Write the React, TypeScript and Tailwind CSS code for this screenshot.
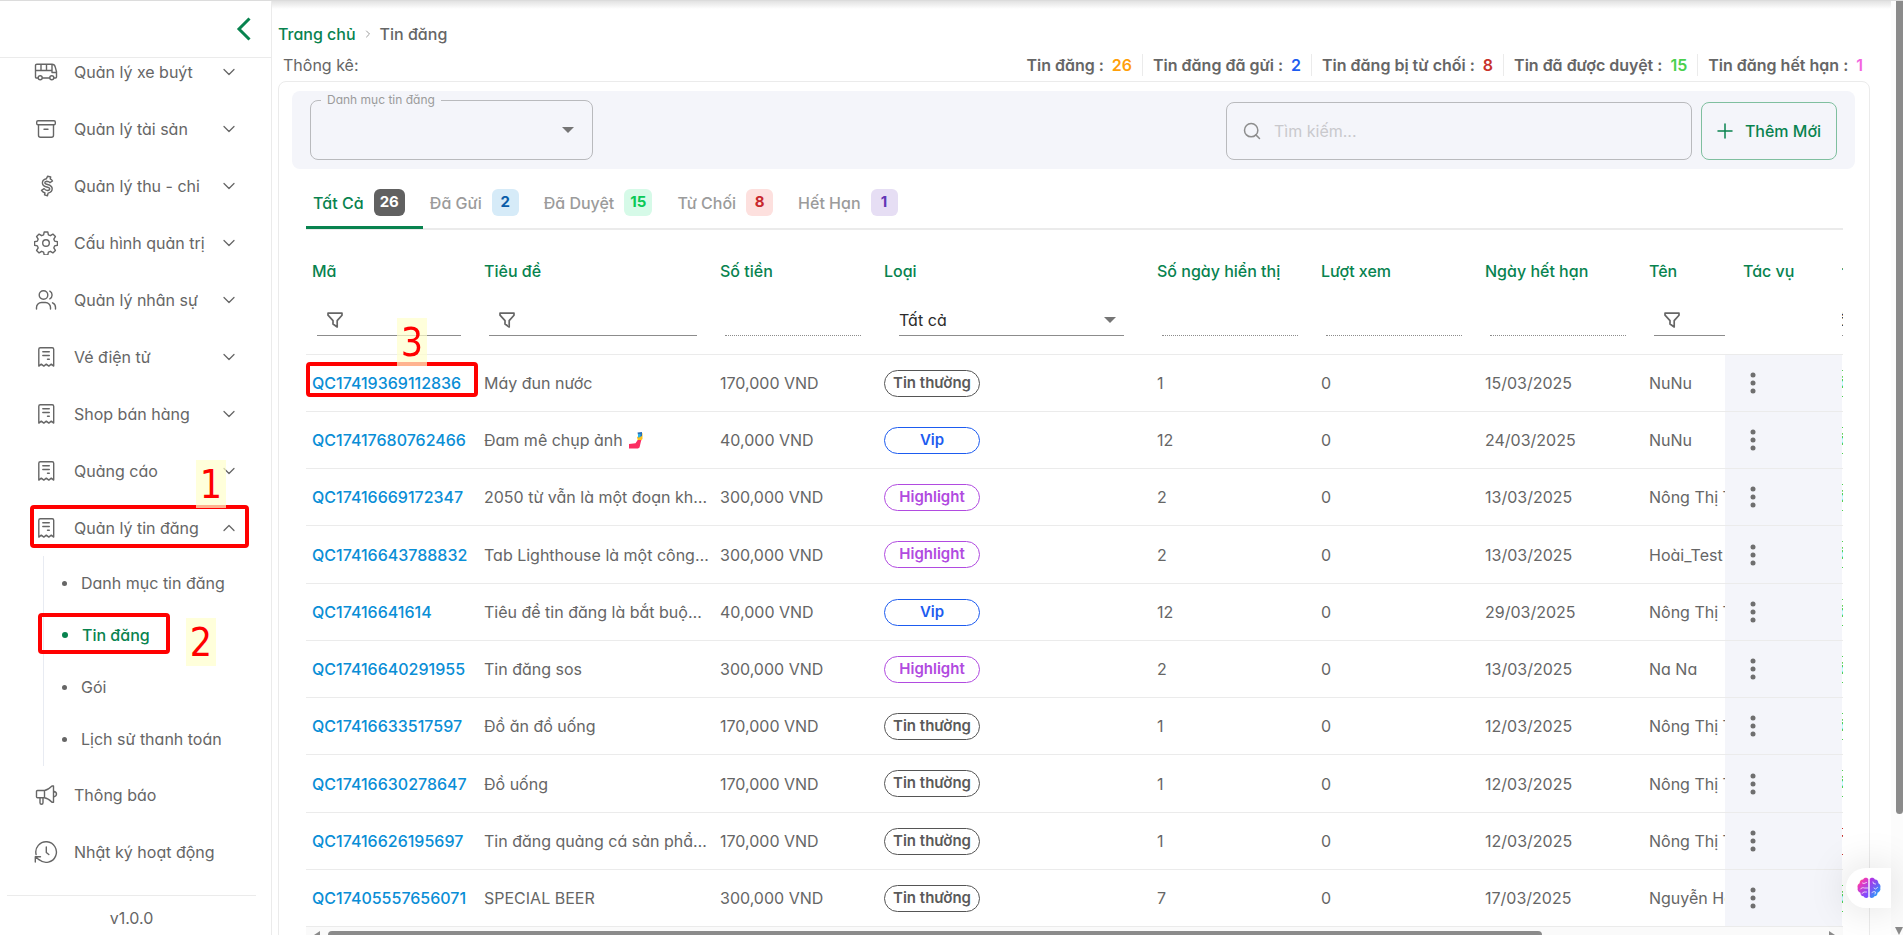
import { useState } from "react";
import { ChevronDown, ChevronUp, ChevronRight, Plus, Search } from "lucide-react";

type IconName = "bus" | "archive" | "dollar" | "gear" | "users" | "receipt" | "megaphone" | "history";

interface MenuItem {
  label: string;
  icon: IconName;
  leaf?: boolean;
  children?: string[];
}

const MENU: MenuItem[] = [
  { label: "Quản lý xe buýt", icon: "bus" },
  { label: "Quản lý tài sản", icon: "archive" },
  { label: "Quản lý thu - chi", icon: "dollar" },
  { label: "Cấu hình quản trị", icon: "gear" },
  { label: "Quản lý nhân sự", icon: "users" },
  { label: "Vé điện tử", icon: "receipt" },
  { label: "Shop bán hàng", icon: "receipt" },
  { label: "Quảng cáo", icon: "receipt" },
  {
    label: "Quản lý tin đăng",
    icon: "receipt",
    children: ["Danh mục tin đăng", "Tin đăng", "Gói", "Lịch sử thanh toán"],
  },
  { label: "Thông báo", icon: "megaphone", leaf: true },
  { label: "Nhật ký hoạt động", icon: "history", leaf: true },
];

const STATS = [
  { label: "Tin đăng :", value: 26, color: "text-[#ff9f0a]" },
  { label: "Tin đăng đã gửi :", value: 2, color: "text-[#1d5cf0]" },
  { label: "Tin đăng bị từ chối :", value: 8, color: "text-[#c8322b]" },
  { label: "Tin đã được duyệt :", value: 15, color: "text-[#4ad04e]" },
  { label: "Tin đăng hết hạn :", value: 1, color: "text-[#f364e0]" },
];

const TABS = [
  { label: "Tất Cả", count: 26, badge: "bg-[#616161] text-white" },
  { label: "Đã Gửi", count: 2, badge: "bg-[#d6ebf8] text-[#0a5ca8]" },
  { label: "Đã Duyệt", count: 15, badge: "bg-[#d6fae8] text-[#0ac956]" },
  { label: "Từ Chối", count: 8, badge: "bg-[#fde0de] text-[#c8282c]" },
  { label: "Hết Hạn", count: 1, badge: "bg-[#e6def4] text-[#6236b5]" },
];

type Kind = "Tin thường" | "Vip" | "Highlight";

const KIND_STYLE: Record<Kind, string> = {
  "Tin thường": "border-[#555] text-[#5a5a5a]",
  Vip: "border-[#1d5cf0] text-[#1d5cf0]",
  Highlight: "border-[#b14be0] text-[#b14be0]",
};

interface Post {
  code: string;
  title: string;
  selfie?: boolean;
  price: string;
  kind: Kind;
  days: number;
  expire: string;
  name: string;
  status: string;
}

const POSTS: Post[] = [
  { code: "QC17419369112836", title: "Máy đun nước", price: "170,000 VND", kind: "Tin thường", days: 1, expire: "15/03/2025", name: "NuNu", status: "Đã duyệt" },
  { code: "QC17417680762466", title: "Đam mê chụp ảnh", selfie: true, price: "40,000 VND", kind: "Vip", days: 12, expire: "24/03/2025", name: "NuNu", status: "Đã duyệt" },
  { code: "QC17416669172347", title: "2050 từ vẫn là một đoạn khá dài", price: "300,000 VND", kind: "Highlight", days: 2, expire: "13/03/2025", name: "Nông Thị Thu", status: "Đã duyệt" },
  { code: "QC17416643788832", title: "Tab Lighthouse là một công cụ", price: "300,000 VND", kind: "Highlight", days: 2, expire: "13/03/2025", name: "Hoài_Test", status: "Đã duyệt" },
  { code: "QC17416641614", title: "Tiêu đề tin đăng là bắt buộc nhập", price: "40,000 VND", kind: "Vip", days: 12, expire: "29/03/2025", name: "Nông Thị Thu", status: "Đã duyệt" },
  { code: "QC17416640291955", title: "Tin đăng sos", price: "300,000 VND", kind: "Highlight", days: 2, expire: "13/03/2025", name: "Na Na", status: "Đã duyệt" },
  { code: "QC17416633517597", title: "Đồ ăn đồ uống", price: "170,000 VND", kind: "Tin thường", days: 1, expire: "12/03/2025", name: "Nông Thị Thu", status: "Đã duyệt" },
  { code: "QC17416630278647", title: "Đồ uống", price: "170,000 VND", kind: "Tin thường", days: 1, expire: "12/03/2025", name: "Nông Thị Thu", status: "Đã duyệt" },
  { code: "QC17416626195697", title: "Tin đăng quảng cá sản phẩm mới", price: "170,000 VND", kind: "Tin thường", days: 1, expire: "12/03/2025", name: "Nông Thị Thu", status: "Từ chối" },
  { code: "QC17405557656071", title: "SPECIAL BEER", price: "300,000 VND", kind: "Tin thường", days: 7, expire: "17/03/2025", name: "Nguyễn Hoàng", status: "Đã duyệt" },
];

const MenuIcon = ({ name }: { name: IconName }) => (
  <svg
    viewBox="0 0 24 24"
    className="size-6 shrink-0"
    fill="none"
    stroke="currentColor"
    strokeWidth="1.4"
    strokeLinecap="round"
    strokeLinejoin="round"
  >
    {name === "bus" && (
      <>
        <path d="M4 18H2.500a1 1 0 0 1-1-1V5.500a1.300 1.300 0 0 1 1.300-1.300H18c1.800 0 2.800 1 3.200 2.600l1.300 5V17a1 1 0 0 1-1 1H20M8.500 18h7M1.500 10.500H18v2h4.500M7 4.200v6.300M12.500 4.200v6.300M18 4.200v6.300" />
        <circle cx="6.200" cy="17.700" r="2" />
        <circle cx="17.800" cy="17.700" r="2" />
      </>
    )}
    {name === "archive" && (
      <>
        <rect x="2.700" y="3.700" width="18.600" height="4" rx="1.300" />
        <path d="M4.500 7.700v10.600a2 2 0 0 0 2 2h11a2 2 0 0 0 2-2V7.700M10 12.200h4" />
      </>
    )}
    {name === "dollar" && (
      <path d="M13.700 2.200l3 .8-.5 1.900c1 .5 1.800 1.200 2.300 2.100l-2.600 1.700c-.7-1-1.800-1.500-3.100-1.500-1.300.1-2 .7-2 1.500 0 .9.800 1.300 2.800 1.800 2.800.7 4.600 2 4.600 4.300 0 2.100-1.500 3.800-4.100 4.300l-.6 2.600-3-.8.500-1.900c-1.600-.5-2.800-1.400-3.500-2.600l2.600-1.700c.9 1.200 2.100 1.800 3.500 1.800 1.400-.1 2.100-.8 2.100-1.700s-1-1.300-3-1.800c-2.600-.7-4.300-1.900-4.300-4.100 0-2 1.400-3.600 3.900-4.100z" />
    )}
    {name === "gear" && (
      <>
        <circle cx="12" cy="12" r="3.300" />
        <path d="M10.200 1h3.600l.6 2.900 2 .8 2.500-1.600 2.500 2.500-1.600 2.500.8 2 2.900.6v3.600l-2.900.6-.8 2 1.600 2.500-2.500 2.500-2.500-1.600-2 .8-.6 2.900h-3.600l-.6-2.900-2-.8-2.500 1.600-2.500-2.500 1.600-2.500-.8-2L.5 14.300v-3.600l2.900-.6.8-2-1.600-2.500 2.500-2.500 2.500 1.600 2-.8z" />
      </>
    )}
    {name === "users" && (
      <>
        <circle cx="9.500" cy="7" r="4.300" />
        <path d="M2.500 21v-1.500a5 5 0 0 1 5-5h4a5 5 0 0 1 5 5V21M15.800 3.200a4.300 4.300 0 0 1 0 7.600M18.500 14.800a4.800 4.800 0 0 1 3 4.500V21" />
      </>
    )}
    {name === "receipt" && (
      <path d="M4.800 4.200a1.500 1.500 0 0 1 1.500-1.500h11.900a1.500 1.500 0 0 1 1.500 1.500v16.900l-2.400-2-2.500 2-2.500-2-2.500 2-2.500-2-2.500 2zM8.800 6.700h6.500M8.800 10.500h6.500M13.500 14.300h1.800" />
    )}
    {name === "megaphone" && (
      <path d="M10.500 7.500h-7a1 1 0 0 0-1 1v5.200a1 1 0 0 0 1 1h7zM6 14.700v5a1.500 1.500 0 0 0 3 0v-5M10.500 14.700c3.500.5 5.500 2.500 7.500 4.500h1.500V3H18c-2 2-4 4-7.500 4.500M19.500 8.200c2.300.5 3 1.700 3 2.900s-.7 2.400-3 2.900" />
    )}
    {name === "history" && <path d="M5.300 19.800a10.300 10.300 0 1 0-3.200-5.300M1.300 22v-5.300H6.500M1.500 16.900 5.300 20M12.300 7v5.500l2.500 2" />}
  </svg>
);

const FilterIcon = () => (
  <svg viewBox="0 0 16 16" className="size-4" fill="none" stroke="currentColor" strokeWidth="1.700" strokeLinejoin="round">
    <path d="M1 1.200h14v2L10.200 8.600V15L6 12V8.600L1 3.200z" />
  </svg>
);

// Selfie arm drawn after the post title
const SelfieIcon = () => (
  <svg viewBox="0 0 14 17" className="ml-1.5 inline-block h-[17px] w-3.5 align-[-3px]">
    <path fill="#fbc11b" d="M8 5.500 10 3l3.500-2v6l-2 2H9z" />
    <path fill="#2b6fb8" d="M8.500.500 13 0v4l-3.500 1.500z" />
    <path fill="#29b3e6" d="M9 2h2.500v3L9 5.500z" />
    <path fill="#fb2d62" d="M8.700 8h3.600l-1.800 7.500L9 16.500H0V12l6.500-.7z" />
  </svg>
);

const BrainIcon = () => (
  <svg viewBox="0 0 24 24" className="size-6">
    <defs>
      <linearGradient id="brain-left" x1="0" y1="0" x2="0.600" y2="1">
        <stop offset="0" stopColor="#fb923c" />
        <stop offset="0.350" stopColor="#ec38bc" />
        <stop offset="1" stopColor="#7c4dff" />
      </linearGradient>
      <linearGradient id="brain-right" x1="0" y1="0" x2="0.600" y2="1">
        <stop offset="0" stopColor="#c02ae0" />
        <stop offset="0.550" stopColor="#6f5cf5" />
        <stop offset="1" stopColor="#22a7f9" />
      </linearGradient>
    </defs>
    <path fill="url(#brain-left)" d="M11.300 3v18c-1.200 1.300-3.800 1.300-4.700-.8-2 .1-3.400-1.500-3.100-3.400C1.200 16 .1 14 .7 12 0 10 1 8 2.600 7.300 2.600 5 4 3.300 6.100 3.500 7 1.300 10 1.300 11.300 3z" />
    <path fill="url(#brain-right)" d="M12.700 3v18c1.200 1.300 3.800 1.300 4.700-.8 2 .1 3.400-1.500 3.100-3.400 2.300-.8 3.400-2.800 2.800-4.800.7-2-.3-4-1.900-4.700 0-2.300-1.400-4-3.500-3.800-.9-2.200-3.900-2.200-5.200-.5z" />
    <path
      fill="none"
      stroke="#fff"
      strokeOpacity="0.800"
      strokeWidth="0.900"
      strokeLinecap="round"
      d="M9.500 6.500 7 7.500 5.500 7M3.500 13c1-1.500 2.500-1.500 4-1h3.500M5 17.500l2-1.500h2.500M16 6l.5 1.500L18.500 8M20.500 11.500l-2 1.500-1.500-1M15 16.500l2-1 1.500.5-.5 2"
    />
  </svg>
);

const Sidebar = () => (
  <aside className="flex w-[272px] shrink-0 flex-col border-r border-[#ebebeb]">
    <header className="flex h-[57px] shrink-0 items-center justify-end border-b border-[#ebebeb] pr-[15px]">
      <button type="button" aria-label="Thu gọn" className="text-[#08834f]">
        <svg viewBox="0 0 24 24" className="size-6" fill="none" stroke="currentColor" strokeWidth="3">
          <path d="M17.500 1.500 7 12l10.500 10.500" />
        </svg>
      </button>
    </header>
    <nav className="min-h-0 flex-1 overflow-hidden">
      <ul className="-mt-[15px]">
        {MENU.map((item) => (
          <li key={item.label}>
            <button type="button" className="flex h-[57px] w-full items-center pr-8 pl-[34px] text-left">
              <MenuIcon name={item.icon} />
              <span className="ml-4 flex-1">{item.label}</span>
              {!item.leaf &&
                (item.children ? <ChevronUp size={20} strokeWidth={1.5} /> : <ChevronDown size={20} strokeWidth={1.5} />)}
            </button>
            {item.children && (
              <ul className="ml-[43px] border-l border-[#e8ebf2] py-px">
                {item.children.map((child) => (
                  <li key={child}>
                    <a
                      href="#"
                      className={`flex h-[52px] items-center pl-[18px] ${child === "Tin đăng" ? "font-medium text-[#08834f]" : ""}`}
                    >
                      <span className={`mr-3.5 rounded-full bg-current ${child === "Tin đăng" ? "size-1.5" : "size-[5px]"}`} />
                      {child}
                    </a>
                  </li>
                ))}
              </ul>
            )}
          </li>
        ))}
      </ul>
    </nav>
    <footer className="mr-[15px] ml-[7px] flex h-10 shrink-0 items-center justify-center border-t border-[#ebebeb] pt-1">v1.0.0</footer>
  </aside>
);

const Caret = () => (
  <svg viewBox="0 0 12 6" className="pointer-events-none h-1.5 w-3" fill="#757575">
    <path d="M0 0h12L6 6z" />
  </svg>
);

const Toolbar = () => (
  <div className="flex items-end justify-between rounded-lg bg-[#f4f5fa] px-[18px] pt-[3px] pb-[9px]">
    <fieldset className="h-[66px] w-[283px] rounded-lg border border-[#b9babd]">
      <legend className="ml-2.5 px-1.5 text-xs leading-3 text-[#9b9b9b]">
        <label htmlFor="category">Danh mục tin đăng</label>
      </legend>
      <div className="grid h-12 items-center">
        <select id="category" className="col-start-1 row-start-1 h-full w-full appearance-none bg-transparent px-4 outline-none">
          <option></option>
        </select>
        <div className="pointer-events-none col-start-1 row-start-1 mr-[18px] justify-self-end">
          <Caret />
        </div>
      </div>
    </fieldset>
    <div className="flex gap-[9px]">
      <label className="flex h-[58px] w-[466px] items-center gap-3 rounded-lg border border-[#b9babd] px-[15px]">
        <Search size={20} strokeWidth={1.8} className="text-[#8d8d8d]" />
        <input type="text" aria-label="Tìm kiếm" placeholder="Tìm kiếm..." className="min-w-0 flex-1 bg-transparent outline-none placeholder:text-[#c9c9cd]" />
      </label>
      <button type="button" className="flex h-[58px] w-[136px] items-center justify-center gap-2 rounded-lg border border-[#7fbf9f] pr-1 font-medium text-[#08834f]">
        <Plus size={24} strokeWidth={1.5} />
        Thêm Mới
      </button>
    </div>
  </div>
);

const TextFilter = ({ label }: { label: string }) => (
  <label className="flex h-8 items-center border-b border-[#8c8c8c] pl-2.5">
    <FilterIcon />
    <input type="text" aria-label={label} className="min-w-0 flex-1 bg-transparent outline-none" />
  </label>
);

const KindFilter = ({ label }: { label: string }) => (
  <div className="grid h-8 items-center border-b border-[#8c8c8c]">
    <select aria-label={label} className="col-start-1 row-start-1 w-full appearance-none bg-transparent text-[#2b2b2b] outline-none">
      <option>Tất cả</option>
    </select>
    <div className="pointer-events-none col-start-1 row-start-1 mr-2 justify-self-end">
      <Caret />
    </div>
  </div>
);

const EmptyFilter = ({ label }: { label: string }) => (
  <input type="text" aria-label={label} disabled className="block h-8 w-full border-b border-dotted border-[#8c8c8c] bg-transparent" />
);

const Pill = ({ text, className }: { text: string; className: string }) => (
  <span className={`flex h-[27px] w-[96px] items-center justify-center rounded-full border text-[15px] font-semibold whitespace-nowrap ${className}`}>
    {text}
  </span>
);

const COLUMNS: { title: string; filter?: "text" | "kind" | "empty" }[] = [
  { title: "Mã", filter: "text" },
  { title: "Tiêu đề", filter: "text" },
  { title: "Số tiền", filter: "empty" },
  { title: "Loại", filter: "kind" },
  { title: "Số ngày hiển thị", filter: "empty" },
  { title: "Lượt xem", filter: "empty" },
  { title: "Ngày hết hạn", filter: "empty" },
  { title: "Tên", filter: "text" },
  { title: "Trạng thái", filter: "kind" },
];

const PostTable = () => (
  <div className="overflow-hidden">
    <table className="w-[123%] table-fixed border-collapse">
      <colgroup>
        <col className="w-[172px]" />
        <col className="w-[236px]" />
        <col className="w-[164px]" />
        <col className="w-[273px]" />
        <col className="w-[164px]" />
        <col className="w-[164px]" />
        <col className="w-[164px]" />
        <col className="w-[164px]" />
        <col />
        <col className="w-[117px]" />
      </colgroup>
      <thead>
        <tr className="h-[74px] text-left text-[#08834f]">
          {COLUMNS.map((col) => (
            <th key={col.title} className="px-1.5 pt-2 font-medium">
              {col.title}
            </th>
          ))}
          <th className="sticky right-px bg-white pt-2 pl-[18px] font-medium">Tác vụ</th>
        </tr>
        <tr className="border-b border-[#ebebeb]">
          {COLUMNS.map((col) => (
            <td key={col.title} className={`pb-[18px] align-top ${col.filter === "kind" ? "pr-[27px] pl-[21px]" : "pr-[17px] pl-[11px]"}`}>
              {col.filter === "text" && <TextFilter label={col.title} />}
              {col.filter === "kind" && <KindFilter label={col.title} />}
              {col.filter === "empty" && <EmptyFilter label={col.title} />}
            </td>
          ))}
          <td className="sticky right-px bg-white" />
        </tr>
      </thead>
      <tbody>
        {POSTS.map((post) => (
          <tr key={post.code} className="h-[57px] border-b border-[#ebebeb] nth-[4n]:h-[58px]">
            <td className="px-1.5">
              <a href="#" className="font-medium text-[#0a8ed6]">
                {post.code}
              </a>
            </td>
            <td className="truncate pr-1 pl-1.5">
              {post.title}
              {post.selfie && <SelfieIcon />}
            </td>
            <td className="px-1.5">{post.price}</td>
            <td className="px-1.5">
              <Pill text={post.kind} className={KIND_STYLE[post.kind]} />
            </td>
            <td className="px-1.5">{post.days}</td>
            <td className="px-1.5">0</td>
            <td className="px-1.5">{post.expire}</td>
            <td className="px-1.5 whitespace-nowrap">{post.name}</td>
            <td className="px-1.5">
              <Pill
                text={post.status}
                className={post.status === "Từ chối" ? "border-[#c8322b] text-[#c8322b]" : "border-[#4ad04e] text-[#4ad04e]"}
              />
            </td>
            <td className="sticky right-px bg-[#f4f5fa] pl-4">
              <button type="button" aria-label="Tác vụ" className="block text-[#6f6f6f]">
                <svg viewBox="0 0 24 24" className="size-6" fill="currentColor">
                  <circle cx="12" cy="4" r="2.500" />
                  <circle cx="12" cy="12" r="2.500" />
                  <circle cx="12" cy="20" r="2.500" />
                </svg>
              </button>
            </td>
          </tr>
        ))}
      </tbody>
    </table>
    <div className="flex h-4 items-start bg-[#fafafa] pt-1">
      <span className="mx-2 border-y-4 border-r-6 border-y-transparent border-r-[#8b8b8b]" />
      <div className="h-2 w-[79%] rounded-full bg-[#8b8b8b]" />
      <span className="mr-2 ml-auto border-y-4 border-l-6 border-y-transparent border-l-[#8b8b8b]" />
    </div>
  </div>
);

const Marker = ({ className, text }: { className: string; text: string }) => (
  <span
    className={`absolute flex h-12 w-[30px] items-center justify-center bg-[#ffffcc]/70 font-['DejaVu_Sans_Condensed','DejaVu_Sans',sans-serif] text-[39px] leading-none text-[#ff0000] ${className}`}
  >
    {text}
  </span>
);

// Numbered call-outs for the user guide
const Callouts = () => (
  <div className="pointer-events-none">
    <div className="absolute top-[504px] left-[30px] h-[43px] w-[219px] rounded-sm border-4 border-[#ff0000]" />
    <div className="absolute top-[612px] left-[38px] h-[41px] w-[132px] rounded-sm border-4 border-[#ff0000]" />
    <div className="absolute top-[361px] left-[306px] h-[35px] w-[172px] rounded-sm border-4 border-[#ff0000]" />
    <Marker className="top-[459px] left-[196px]" text="1" />
    <Marker className="top-[617px] left-[186px]" text="2" />
    <Marker className="top-[317px] left-[397px]" text="3" />
  </div>
);

export default function App() {
  const [tab, setTab] = useState("Tất Cả");

  return (
    <div className="relative flex h-screen overflow-hidden border-t border-[#dcdcdc] bg-white font-['Inter','Noto_Sans',sans-serif] text-base text-[#666] [font-feature-settings:'cv11']">
      <Sidebar />
      <main className="min-w-0 flex-1 bg-linear-to-b from-[#e2e2e2] to-white to-[8px] pt-[21px] pl-1.5">
        <nav className="flex items-center gap-1.5 font-medium">
          <a href="#" className="text-[#08834f]">
            Trang chủ
          </a>
          <ChevronRight size={12} className="text-[#9b9b9b]" />
          <span>Tin đăng</span>
        </nav>
        <div className="mt-[7px] flex items-center justify-between pr-[18px] pl-[5px]">
          <span>Thông kê:</span>
          <dl className="flex divide-x divide-[#ebebeb]">
            {STATS.map((stat) => (
              <div key={stat.label} className="flex h-[22px] items-center gap-2 px-2.5 font-semibold">
                <dt>{stat.label}</dt>
                <dd className={stat.color}>{stat.value}</dd>
              </div>
            ))}
          </dl>
        </div>
        <section className="mt-1 mr-[21px] rounded-t-lg border border-[#ebebeb] py-[9px] pr-3.5 pl-[13px]">
          <Toolbar />
          <div className="pr-3 pl-3.5">
            <div role="tablist" className="flex h-[61px] border-b-2 border-[#ebebeb]">
              {TABS.map((t) => (
                <button
                  key={t.label}
                  type="button"
                  role="tab"
                  aria-selected={tab === t.label}
                  onClick={() => setTab(t.label)}
                  className={`-mb-px flex items-center gap-2.5 border-b-3 pt-2.5 pr-[18px] pl-[7px] font-medium ${tab === t.label ? "border-[#08834f] text-[#08834f]" : "border-transparent text-[#9b9b9b]"}`}
                >
                  {t.label}
                  <span className={`flex h-[27px] min-w-[27px] items-center justify-center rounded-md px-1.5 text-[15px] font-bold ${t.badge}`}>
                    {t.count}
                  </span>
                </button>
              ))}
            </div>
            <PostTable />
          </div>
        </section>
      </main>
      {/* page scrollbar */}
      <div className="flex w-3 shrink-0 flex-col items-end justify-between bg-[#fcfcfc]">
        <div className="h-[87%] w-[7px] rounded-b-full bg-[#8b8b8b]" />
        <span className="border-x-4 border-t-8 border-x-transparent border-t-[#8b8b8b]" />
      </div>
      <button
        type="button"
        aria-label="Trợ lý AI"
        className="absolute right-3 bottom-[27px] flex h-10 w-[45px] items-center rounded-l-full bg-white pl-[11px] shadow-[0_0_40px_rgba(0,0,0,0.15)]"
      >
        <BrainIcon />
      </button>
      <Callouts />
    </div>
  );
}
